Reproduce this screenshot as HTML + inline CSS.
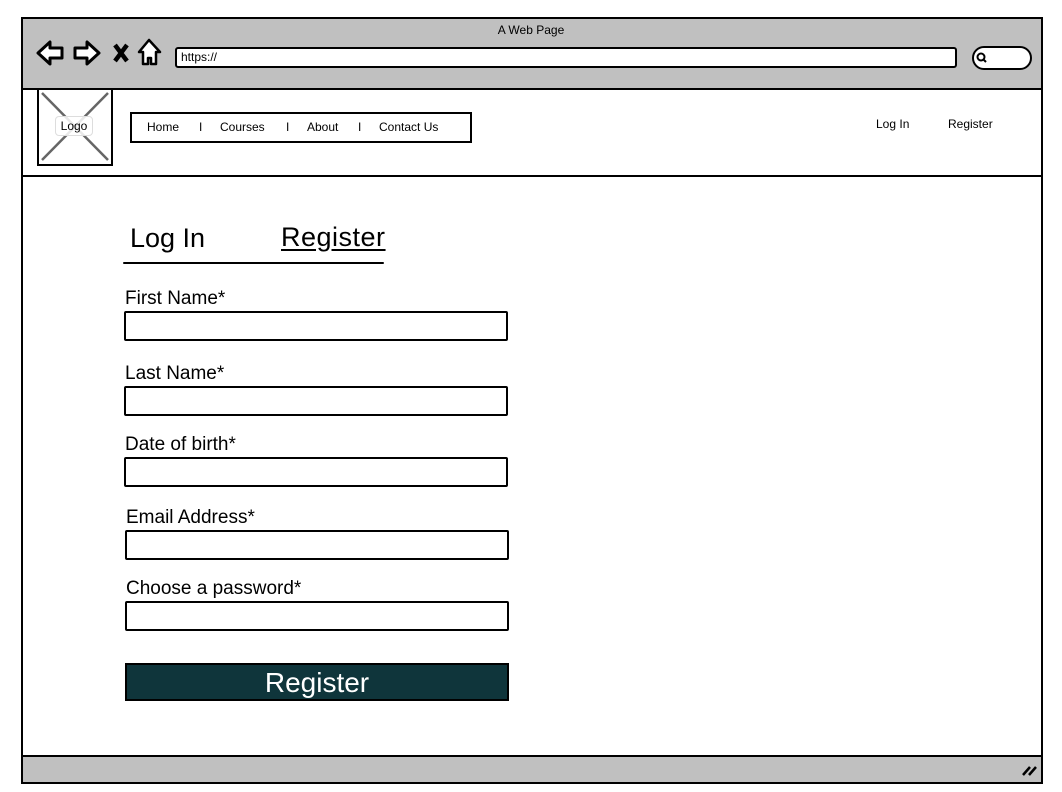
<!DOCTYPE html>
<html><head><style>
body{margin:0;width:1062px;height:792px;background:#fff;position:relative;overflow:hidden;font-family:"Liberation Sans",sans-serif;color:#000}
.a{position:absolute}
.in{position:absolute;border:2px solid #000;border-radius:2px;background:#fff;height:26px;width:380px;left:124px}
.lb{position:absolute;font-size:19px;left:125px}
.nav{font-size:12px}
</style></head><body>
<div class="a" style="left:21px;top:17px;width:1018px;height:763px;border:2px solid #000;"></div>
<div class="a" style="left:23px;top:19px;width:1018px;height:69px;background:#c0c0c0;border-bottom:2px solid #000"></div>
<div class="a" style="left:0;width:1062px;top:23px;text-align:center;font-size:12px">A Web Page</div>
<svg class="a" style="left:30px;top:36px" width="140" height="36">
<path d="M8 17 L20 6 L20 12 L32 12 L32 22 L20 22 L20 28 Z" fill="#fff" stroke="#000" stroke-width="3" stroke-linejoin="round"/>
<path d="M69 17 L57 6 L57 12 L45 12 L45 22 L57 22 L57 28 Z" fill="#fff" stroke="#000" stroke-width="3" stroke-linejoin="round"/>
<path d="M85 9 L97 25 M97 9 L85 25" stroke="#000" stroke-width="4.5"/>
<path d="M119 4 L109 16 L113 16 L113 28 L118 28 L118 22 L121 22 L121 28 L126 28 L126 16 L130 16 Z" fill="#fff" stroke="#000" stroke-width="2.5" stroke-linejoin="round"/>
</svg>
<div class="a" style="left:175px;top:47px;width:774px;height:17px;border:2px solid #000;border-radius:3px;background:#fff;font-size:12px;line-height:17px;padding-left:4px">https://</div>
<div class="a" style="left:972px;top:46px;width:56px;height:20px;border:2px solid #000;border-radius:12px;background:#fff"></div>
<svg class="a" style="left:974px;top:49px" width="16" height="16"><circle cx="7" cy="8" r="3.5" fill="none" stroke="#000" stroke-width="2"/><path d="M9 10 L12 13" stroke="#000" stroke-width="2"/></svg>
<div class="a" style="left:37px;top:88px;width:72px;height:74px;border:2px solid #000;"></div>
<svg class="a" style="left:39px;top:90px" width="72" height="74"><path d="M3 3 L69 70 M69 3 L3 70" stroke="#666" stroke-width="2.5"/></svg>
<div class="a" style="left:55px;top:116px;width:36px;height:18px;background:rgba(255,255,255,0.85);border:1px solid #ddd;border-radius:4px;font-size:12px;text-align:center;line-height:18px">Logo</div>
<div class="a nav" style="left:130px;top:112px;width:338px;height:27px;border:2px solid #000;"></div>
<div class="a nav" style="left:147px;top:120px">Home</div>
<div class="a nav" style="left:199px;top:120px">I</div>
<div class="a nav" style="left:220px;top:120px">Courses</div>
<div class="a nav" style="left:286px;top:120px">I</div>
<div class="a nav" style="left:307px;top:120px">About</div>
<div class="a nav" style="left:358px;top:120px">I</div>
<div class="a nav" style="left:379px;top:120px">Contact Us</div>
<div class="a nav" style="left:876px;top:117px">Log In</div>
<div class="a nav" style="left:948px;top:117px">Register</div>
<div class="a" style="left:23px;top:175px;width:1018px;border-top:2px solid #000"></div>
<div class="a" style="left:130px;top:223px;font-size:27px">Log In</div>
<div class="a" style="left:281px;top:222px;font-size:27px;text-decoration:underline;text-underline-offset:3px;letter-spacing:0.5px">Register</div>
<div class="a" style="left:123px;top:262px;width:261px;border-top:2px solid #000;border-radius:2px"></div>
<div class="lb" style="top:288px">First Name*</div>
<div class="in" style="top:311px"></div>
<div class="lb" style="top:363px">Last Name*</div>
<div class="in" style="top:386px"></div>
<div class="lb" style="top:434px">Date of birth*</div>
<div class="in" style="top:457px"></div>
<div class="lb" style="top:507px;left:126px">Email Address*</div>
<div class="in" style="top:530px;left:125px"></div>
<div class="lb" style="top:578px;left:126px">Choose a password*</div>
<div class="in" style="top:601px;left:125px"></div>
<div class="a" style="left:125px;top:663px;width:380px;height:34px;border:2px solid #000;background:#0f353b;color:#fff;font-size:28px;text-align:center;line-height:36px">Register</div>
<div class="a" style="left:23px;top:755px;width:1018px;height:25px;background:#c0c0c0;border-top:2px solid #000"></div>
<svg class="a" style="left:1020px;top:762px" width="20" height="16"><path d="M3 13 L10 5 M9 13 L16 5" stroke="#000" stroke-width="2.5"/></svg>
</body></html>
